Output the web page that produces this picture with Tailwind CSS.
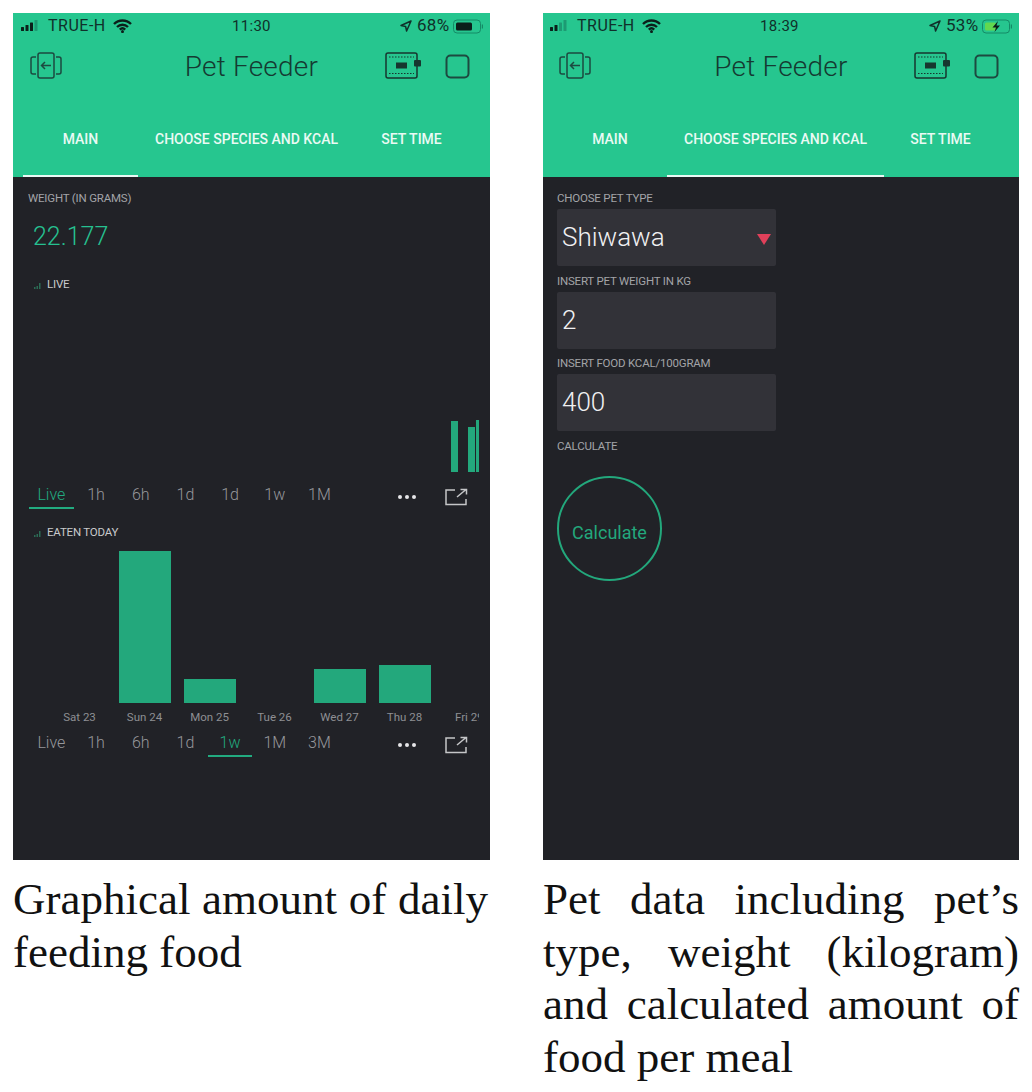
<!DOCTYPE html>
<html lang="en">
<head>
  <meta charset="UTF-8" />
  <title>Pet Feeder</title>
  <script src="https://cdn.jsdelivr.net/npm/@tailwindcss/browser@4"></script>
</head>
<body class="bg-white">
  <div class="flex gap-[53px] pt-[13px] pl-[13px] w-[1032px] h-[1092px] overflow-hidden">

    <!-- left: main tab -->
    <div class="w-[477px] shrink-0">
      <div class="h-[847px] bg-[#212227] font-['Roboto',sans-serif] overflow-hidden">
        <div class="relative h-[164px] bg-[#26c68f]">
          <div class="relative h-[26px] flex items-center text-[16px] text-[#10302a]">
            <svg class="ml-[8px]" width="18" height="14" viewBox="0 0 18 14"><rect x="0" y="8" width="3" height="4" rx="0.5" fill="#0b1f1a"/><rect x="4.500" y="6" width="3" height="6" rx="0.5" fill="#0b1f1a"/><rect x="9" y="3.500" width="3" height="8.500" rx="0.5" fill="#0b1f1a"/><rect x="13.500" y="1" width="3" height="11" rx="0.5" fill="#1d9a73"/></svg>
            <span class="ml-[9px] w-[58px] tracking-[0.5px] whitespace-nowrap">TRUE-H</span>
            <svg class="ml-[7px]" width="19" height="14" viewBox="0 0 19 14"><path d="M1 5a12 12 0 0 1 17 0M4 8a8 8 0 0 1 11 0M6.800 10.600a4 4 0 0 1 5.400 0" fill="none" stroke="#0b1f1a" stroke-width="2.400"/><circle cx="9.500" cy="12.600" r="1.500" fill="#0b1f1a"/></svg>
            <span class="absolute left-[219px] text-[15px] tracking-[0.3px]">11:30</span>
            <svg class="absolute left-[387px]" width="12" height="12" viewBox="0 0 12 12"><path d="M11 1 1 5.500l4.600 1 1 4.500z" fill="none" stroke="#10302a" stroke-width="1.500" stroke-linejoin="round"/></svg>
            <span class="absolute left-[404px] text-[17px] tracking-[0.3px]">68%</span>
            <svg class="absolute left-[440px]" width="30" height="15" viewBox="0 0 30 15"><rect x="0.500" y="1" width="27" height="13" rx="3.500" fill="none" stroke="#158a66"/><rect x="3" y="3.500" width="16" height="8" rx="1.500" fill="#0b1f1a"/><rect x="28.800" y="5.500" width="1.200" height="4" fill="#158a66"/></svg>
          </div>
          <div class="relative h-[54px] flex items-center">
            <svg class="ml-[17px]" width="32" height="28" viewBox="0 0 32 28" fill="none" stroke="#1d4a40" stroke-width="1.500"><rect x="8" y="1" width="16" height="25" rx="2"/><path d="M6 5H3a2 2 0 0 0-2 2v13a2 2 0 0 0 2 2h3M26 5h3a2 2 0 0 1 2 2v13a2 2 0 0 1-2 2h-3M21 13.500h-9M15 10l-3.500 3.500L15 17" /></svg>
            <span class="absolute left-0 top-[1px] w-[477px] leading-[54px] text-center text-[28px] font-light text-[#153a32] tracking-[0.2px]">Pet Feeder</span>
            <svg class="absolute left-[372px]" width="37" height="28" viewBox="0 0 37 28" fill="none" stroke="#17362f"><rect x="1" y="1" width="31" height="25" rx="2" stroke-width="1.500"/><path d="M4 5h25M4 21.500h25" stroke-dasharray="1.500 1.500" stroke-width="1.200"/><rect x="11" y="10.500" width="11" height="6" fill="#17362f" stroke="none"/><rect x="29" y="8" width="7" height="6.500" rx="1" fill="#17362f" stroke="none"/></svg>
            <svg class="absolute left-[432px]" width="25" height="25" viewBox="0 0 25 25" fill="none"><rect x="1.500" y="1.500" width="22" height="22" rx="4" stroke="#1d4a40" stroke-width="2"/></svg>
          </div>
          <div class="flex pl-[10px] mt-[10px] text-[14px] font-medium text-[#eafaf4] leading-[36px]">
            <div class="w-[115px] h-[74px] text-center pt-[18px] border-b-[2px] border-white/90">MAIN</div>
            <div class="w-[217px] h-[74px] text-center pt-[18px]">CHOOSE SPECIES AND KCAL</div>
            <div class="w-[113px] h-[74px] text-center pt-[18px]">SET TIME</div>
          </div>
        </div>

        <div class="pt-[12px]">
          <div class="h-[18px] pl-[15px] text-[11.500px] leading-[18px] tracking-[-0.2px] text-[#a3a4a8]">WEIGHT (IN GRAMS)</div>
          <div class="h-[40px] mt-[10px] pl-[20px] text-[25px] leading-[40px] font-light text-[#26c090]">22.177</div>
          <div class="h-[16px] mt-[20px] pl-[21px] flex items-center text-[11.500px] tracking-[-0.2px] text-[#c9cacc]">
            <svg width="8" height="7" viewBox="0 0 8 7"><rect x="0" y="5" width="1.500" height="2" fill="#2b6b55"/><rect x="2.500" y="4" width="1.500" height="3" fill="#2b6b55"/><rect x="5" y="1" width="1.500" height="6" fill="#2b6b55"/></svg>
            <span class="ml-[5px]">LIVE</span>
          </div>
          <div class="h-[179px] flex items-end pl-[438px]">
            <div class="w-[7px] h-[51px] bg-[#23a87c]"></div>
            <div class="w-[7px] h-[45px] bg-[#23a87c] ml-[10px]"></div>
            <div class="w-[3px] h-[52px] bg-[#23a87c] ml-[1px]"></div>
          </div>
          <div class="flex mt-[8px] pl-[16px] h-[30px] text-[16px] font-light text-[#96979b]">
            <div class="w-[44.700px] h-[29px] text-center leading-[30px] text-[#22ab80] border-b-[2px] border-[#22ab80]">Live</div>
            <div class="w-[44.700px] text-center leading-[30px]">1h</div>
            <div class="w-[44.700px] text-center leading-[30px]">6h</div>
            <div class="w-[44.700px] text-center leading-[30px]">1d</div>
            <div class="w-[44.700px] text-center leading-[30px]">1d</div>
            <div class="w-[44.700px] text-center leading-[30px]">1w</div>
            <div class="w-[44.700px] text-center leading-[30px]">1M</div>
            <div class="flex gap-[3px] ml-[56px] mt-[15px] h-[4px]">
              <div class="w-[4px] h-[4px] rounded-full bg-[#e6e6e8]"></div>
              <div class="w-[4px] h-[4px] rounded-full bg-[#e6e6e8]"></div>
              <div class="w-[4px] h-[4px] rounded-full bg-[#e6e6e8]"></div>
            </div>
            <svg class="ml-[29px] mt-[8px]" width="23" height="18" viewBox="0 0 23 18" fill="none" stroke="#c5c6c8" stroke-width="1.500"><path d="M10 2H1v14.500h20V11M12 9l9-7.500M15.500 1.500h6v5"/></svg>
          </div>

          <div class="h-[16px] mt-[15px] pl-[21px] flex items-center text-[11.500px] tracking-[-0.2px] text-[#c9cacc]">
            <svg width="8" height="7" viewBox="0 0 8 7"><rect x="0" y="5" width="1.500" height="2" fill="#2b6b55"/><rect x="2.500" y="4" width="1.500" height="3" fill="#2b6b55"/><rect x="5" y="1" width="1.500" height="6" fill="#2b6b55"/></svg>
            <span class="ml-[5px]">EATEN TODAY</span>
          </div>
          <div class="h-[162px] w-[466px] pl-[34px] grid grid-cols-[repeat(7,65px)] overflow-hidden">
            <div class="flex flex-col items-center justify-end"></div>
            <div class="flex flex-col items-center justify-end"><div class="w-[52px] h-[152px] bg-[#23a87c]"></div></div>
            <div class="flex flex-col items-center justify-end"><div class="w-[52px] h-[24px] bg-[#23a87c]"></div></div>
            <div class="flex flex-col items-center justify-end"></div>
            <div class="flex flex-col items-center justify-end"><div class="w-[52px] h-[34px] bg-[#23a87c]"></div></div>
            <div class="flex flex-col items-center justify-end"><div class="w-[52px] h-[38px] bg-[#23a87c]"></div></div>
            <div></div>
          </div>
          <div class="h-[25px] w-[466px] pl-[34px] grid grid-cols-[repeat(7,65px)] overflow-hidden text-[11.500px] leading-[28px] text-[#8e8f93] text-center whitespace-nowrap">
            <div>Sat 23</div><div>Sun 24</div><div>Mon 25</div><div>Tue 26</div><div>Wed 27</div><div>Thu 28</div><div class="pl-[18px] text-left">Fri 29</div>
          </div>
          <div class="flex pl-[16px] h-[30px] text-[16px] font-light text-[#96979b]">
            <div class="w-[44.700px] text-center leading-[30px]">Live</div>
            <div class="w-[44.700px] text-center leading-[30px]">1h</div>
            <div class="w-[44.700px] text-center leading-[30px]">6h</div>
            <div class="w-[44.700px] text-center leading-[30px]">1d</div>
            <div class="w-[44.700px] h-[29px] text-center leading-[30px] text-[#22ab80] border-b-[2px] border-[#22ab80]">1w</div>
            <div class="w-[44.700px] text-center leading-[30px]">1M</div>
            <div class="w-[44.700px] text-center leading-[30px]">3M</div>
            <div class="flex gap-[3px] ml-[56px] mt-[15px] h-[4px]">
              <div class="w-[4px] h-[4px] rounded-full bg-[#e6e6e8]"></div>
              <div class="w-[4px] h-[4px] rounded-full bg-[#e6e6e8]"></div>
              <div class="w-[4px] h-[4px] rounded-full bg-[#e6e6e8]"></div>
            </div>
            <svg class="ml-[29px] mt-[8px]" width="23" height="18" viewBox="0 0 23 18" fill="none" stroke="#c5c6c8" stroke-width="1.500"><path d="M10 2H1v14.500h20V11M12 9l9-7.500M15.500 1.500h6v5"/></svg>
          </div>
        </div>
      </div>
      <p class="mt-[13px] w-[475px] font-['Liberation_Serif',serif] text-[45px] leading-[52.500px] text-justify text-[#111]">Graphical amount of daily feeding food</p>
    </div>

    <!-- right: species tab -->
    <div class="w-[476px] shrink-0">
      <div class="h-[847px] bg-[#212227] font-['Roboto',sans-serif] overflow-hidden">
        <div class="relative h-[164px] bg-[#26c68f]">
          <div class="relative h-[26px] flex items-center text-[16px] text-[#10302a]">
            <svg class="ml-[7px]" width="18" height="14" viewBox="0 0 18 14"><rect x="0" y="8" width="3" height="4" rx="0.5" fill="#0b1f1a"/><rect x="4.500" y="6" width="3" height="6" rx="0.5" fill="#0b1f1a"/><rect x="9" y="3.500" width="3" height="8.500" rx="0.5" fill="#1d9a73"/><rect x="13.500" y="1" width="3" height="11" rx="0.5" fill="#1d9a73"/></svg>
            <span class="ml-[9px] w-[58px] tracking-[0.5px] whitespace-nowrap">TRUE-H</span>
            <svg class="ml-[7px]" width="19" height="14" viewBox="0 0 19 14"><path d="M1 5a12 12 0 0 1 17 0M4 8a8 8 0 0 1 11 0M6.800 10.600a4 4 0 0 1 5.400 0" fill="none" stroke="#0b1f1a" stroke-width="2.400"/><circle cx="9.500" cy="12.600" r="1.500" fill="#0b1f1a"/></svg>
            <span class="absolute left-[217px] text-[15px] tracking-[0.3px]">18:39</span>
            <svg class="absolute left-[386px]" width="12" height="12" viewBox="0 0 12 12"><path d="M11 1 1 5.500l4.600 1 1 4.500z" fill="none" stroke="#10302a" stroke-width="1.500" stroke-linejoin="round"/></svg>
            <span class="absolute left-[403px] text-[17px] tracking-[0.3px]">53%</span>
            <svg class="absolute left-[439px]" width="30" height="15" viewBox="0 0 30 15"><rect x="0.500" y="1" width="27" height="13" rx="3.500" fill="none" stroke="#158a66"/><rect x="3" y="3.500" width="11" height="8" rx="1.500" fill="#62d84f"/><path d="M16 2 10.500 8.500h3.500l-1.500 4.500 5.500-6.500h-3.500z" fill="#0b1f1a"/><rect x="28.800" y="5.500" width="1.200" height="4" fill="#158a66"/></svg>
          </div>
          <div class="relative h-[54px] flex items-center">
            <svg class="ml-[16px]" width="32" height="28" viewBox="0 0 32 28" fill="none" stroke="#1d4a40" stroke-width="1.500"><rect x="8" y="1" width="16" height="25" rx="2"/><path d="M6 5H3a2 2 0 0 0-2 2v13a2 2 0 0 0 2 2h3M26 5h3a2 2 0 0 1 2 2v13a2 2 0 0 1-2 2h-3M21 13.500h-9M15 10l-3.500 3.500L15 17" /></svg>
            <span class="absolute left-0 top-[1px] w-[476px] leading-[54px] text-center text-[28px] font-light text-[#153a32] tracking-[0.2px]">Pet Feeder</span>
            <svg class="absolute left-[371px]" width="37" height="28" viewBox="0 0 37 28" fill="none" stroke="#17362f"><rect x="1" y="1" width="31" height="25" rx="2" stroke-width="1.500"/><path d="M4 5h25M4 21.500h25" stroke-dasharray="1.500 1.500" stroke-width="1.200"/><rect x="11" y="10.500" width="11" height="6" fill="#17362f" stroke="none"/><rect x="29" y="8" width="7" height="6.500" rx="1" fill="#17362f" stroke="none"/></svg>
            <svg class="absolute left-[431px]" width="25" height="25" viewBox="0 0 25 25" fill="none"><rect x="1.500" y="1.500" width="22" height="22" rx="4" stroke="#1d4a40" stroke-width="2"/></svg>
          </div>
          <div class="flex pl-[10px] mt-[10px] text-[14px] font-medium text-[#eafaf4] leading-[36px]">
            <div class="w-[114px] h-[74px] text-center pt-[18px]">MAIN</div>
            <div class="w-[217px] h-[74px] text-center pt-[18px] border-b-[2px] border-white/90">CHOOSE SPECIES AND KCAL</div>
            <div class="w-[113px] h-[74px] text-center pt-[18px]">SET TIME</div>
          </div>
        </div>

        <div class="pt-[12px] pl-[14px]">
          <div class="h-[18px] text-[11.500px] leading-[18px] tracking-[-0.2px] text-[#a3a4a8]">CHOOSE PET TYPE</div>
          <div class="flex items-center justify-between w-[219px] h-[57px] mt-[2px] mb-[5.500px] pl-[5px] pr-[5px] rounded-[2px] bg-[#323238] text-[26px] font-light text-[#f0f0f2]">
            <span>Shiwawa</span>
            <div class="w-0 h-0 mt-[3px] border-x-[7px] border-x-transparent border-t-[11px] border-t-[#e0405a]"></div>
          </div>
          <div class="h-[18px] text-[11.500px] leading-[18px] tracking-[-0.2px] text-[#a3a4a8]">INSERT PET WEIGHT IN KG</div>
          <div class="flex items-center w-[219px] h-[57px] mt-[2px] mb-[5.500px] pl-[5px] rounded-[2px] bg-[#323238] text-[26px] font-light text-[#f0f0f2]">2</div>
          <div class="h-[18px] text-[11.500px] leading-[18px] tracking-[-0.2px] text-[#a3a4a8]">INSERT FOOD KCAL/100GRAM</div>
          <div class="flex items-center w-[219px] h-[57px] mt-[2px] mb-[5.500px] pl-[5px] rounded-[2px] bg-[#323238] text-[26px] font-light text-[#f0f0f2]">400</div>
          <div class="h-[18px] text-[11.500px] leading-[18px] tracking-[-0.2px] text-[#a3a4a8]">CALCULATE</div>
          <div class="flex items-center justify-center w-[105px] h-[105px] mt-[21.500px] pt-[7px] rounded-full border-2 border-[#23a87c] text-[18px] text-[#23a87c]">Calculate</div>
        </div>
      </div>
      <p class="mt-[13px] w-[476px] font-['Liberation_Serif',serif] text-[45px] leading-[52.500px] text-justify text-[#111]">Pet data including pet’s type, weight (kilogram) and calculated amount of food per meal</p>
    </div>
  </div>
</body>
</html>
